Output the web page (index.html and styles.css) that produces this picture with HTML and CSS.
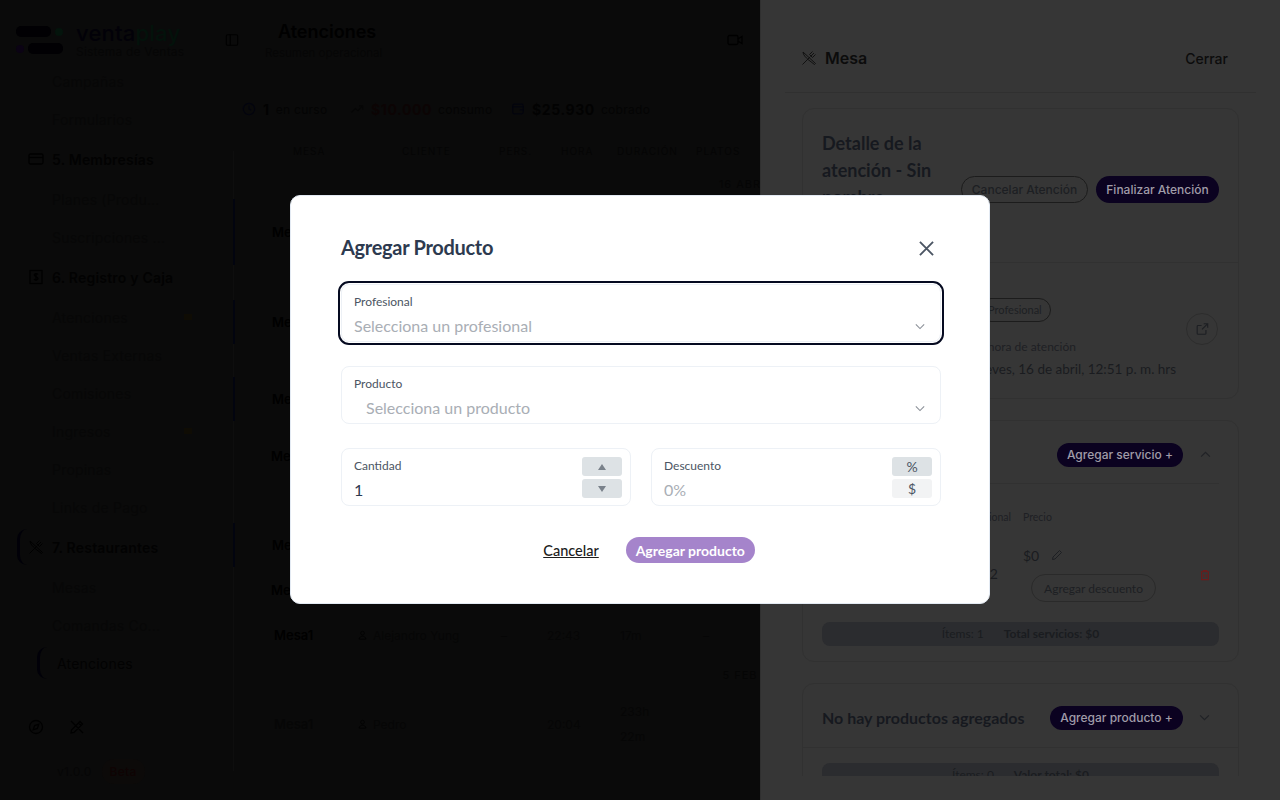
FILE: index.html
```html
<!DOCTYPE html>
<html lang="es">
<head>
  <meta charset="UTF-8">
  <title>Atenciones - ventaplay</title>
  <link rel="stylesheet" href="styles.css">
</head>
<body>

  <div class="app">

    <!-- Sidebar -->
    <aside class="sidebar">
      <div class="brand">
        <div class="logo">
          <div class="logo-line">
            <span class="logo-bar"></span>
            <span class="logo-dot logo-dot-green"></span>
          </div>
          <div class="logo-line logo-line-low">
            <span class="logo-dot logo-dot-purple"></span>
            <span class="logo-bar"></span>
          </div>
        </div>
        <div>
          <div class="brand-name">venta<span class="brand-play">play</span></div>
          <div class="brand-sub">Sistema de Ventas</div>
        </div>
      </div>

      <nav class="nav">
        <div class="nav-inner">
          <a class="nav-sub">Campañas</a>
          <a class="nav-sub">Formularios</a>
          <a class="nav-head">
            <svg class="nav-icon" viewBox="0 0 16 16"><rect x="1" y="3" width="14" height="10" rx="1.5"/><path d="M1 6.5h14"/></svg>
            5. Membresías
          </a>
          <a class="nav-sub">Planes (Produ...</a>
          <a class="nav-sub">Suscripciones ...</a>
          <a class="nav-head">
            <svg class="nav-icon" viewBox="0 0 16 16"><rect x="2" y="1.5" width="12" height="13"/><path d="M10 5.5c-.5-1-3.5-1.2-3.8.4C6 7.800 10 7.500 10 9.700c0 1.600-3.400 1.600-4 .3M8 4v8"/></svg>
            6. Registro y Caja
          </a>
          <a class="nav-sub nav-sub-more">Atenciones<span class="nav-caret"></span></a>
          <a class="nav-sub">Ventas Externas</a>
          <a class="nav-sub">Comisiones</a>
          <a class="nav-sub nav-sub-more">Ingresos<span class="nav-caret"></span></a>
          <a class="nav-sub">Propinas</a>
          <a class="nav-sub">Links de Pago</a>
          <a class="nav-head nav-head-active">
            <svg class="nav-icon nav-icon-thin" viewBox="0 0 16 16"><path d="M2 2c0 3 3 5.500 5 7.500L13.500 14.500 14.500 13.500 2 2M1.500 14.500 9.500 6.500M8.500 4.500 11.500 1.500M10 6l3-3M11.500 7.500l3-3M8.500 4.500l3 3"/></svg>
            7. Restaurantes
          </a>
          <a class="nav-sub">Mesas</a>
          <a class="nav-sub">Comandas Co...</a>
          <a class="nav-current">Atenciones</a>
        </div>
      </nav>

      <div class="side-tools">
        <svg class="tool-icon" viewBox="0 0 16 16"><circle cx="8" cy="8" r="6.500"/><path d="M10.800 5.200 9.400 9.400 5.200 10.800 6.600 6.600z"/></svg>
        <svg class="tool-icon" viewBox="0 0 16 16"><path d="M2 14 2.500 11 11 2.500 13.500 5 5 13.500zM2 2l12 12M9.500 4l2.500 2.500"/></svg>
      </div>
      <div class="version">
        <span>v1.0.0</span>
        <span class="beta">Beta</span>
      </div>
    </aside>

    <!-- Main -->
    <main class="main">
      <div class="topbar">
        <svg class="top-icon" viewBox="0 0 16 16"><rect x="1.500" y="2" width="13" height="12" rx="1.500"/><path d="M6 2v12"/></svg>
        <div class="top-titles">
          <h1>Atenciones</h1>
          <p>Resumen operacional</p>
        </div>
        <svg class="top-video" viewBox="0 0 16 12"><rect x="1" y="1.500" width="10" height="9" rx="1.500"/><path d="M11 5l4-2.500v7L11 7"/></svg>
      </div>

      <div class="stats">
        <div class="stat stat-first">
          <svg class="stat-icon stat-icon-navy" viewBox="0 0 16 16"><circle cx="8" cy="8" r="6.500"/><path d="M8 4v4l2.500 1.500"/></svg>
          <strong>1</strong><span>en curso</span>
        </div>
        <div class="stat stat-second">
          <svg class="stat-icon" viewBox="0 0 16 16"><path d="M1.500 12 6 7.500 9 10l5.500-5.500M10.500 4.500h4v4"/></svg>
          <strong class="stat-red">$10.000</strong><span>consumo</span>
        </div>
        <div class="stat stat-third">
          <svg class="stat-icon stat-icon-navy" viewBox="0 0 16 16"><rect x="2" y="2.500" width="12" height="11" rx="2"/><path d="M2 5.500h12M10 9h4"/></svg>
          <strong>$25.930</strong><span>cobrado</span>
        </div>
      </div>

      <div class="table-head">
        <span>MESA</span>
        <span>CLIENTE</span>
        <span>PERS.</span>
        <span>HORA</span>
        <span>DURACIÓN</span>
        <span>PLATOS</span>
      </div>

      <div class="table-body">
        <div class="date-label date-first">16 ABR</div>
        <div class="row row-tall row-open"><b>Mesa1</b></div>
        <div class="row row-b row-open"><b>Mesa1</b></div>
        <div class="row row-c row-open"><b>Mesa1</b></div>
        <div class="row row-d row-left"><b>Mesa1</b></div>
        <div class="row row-e row-open"><b>Mesa1</b></div>
        <div class="row row-f row-left"><b>Mesa1</b></div>
        <div class="row row-g">
          <b>Mesa1</b>
          <span class="client">
            <svg class="person" viewBox="0 0 12 12"><circle cx="6" cy="3.500" r="2.500"/><path d="M1.500 11.500c0-5 9-5 9 0z"/></svg>
            Alejandro Yung
          </span>
          <span>–</span>
          <span>22:43</span>
          <span>17m</span>
          <span>–</span>
        </div>
        <div class="date-label date-second">5 FEB</div>
        <div class="row row-tall row-h row-open-faint">
          <b>Mesa1</b>
          <span class="client">
            <svg class="person" viewBox="0 0 12 12"><circle cx="6" cy="3.500" r="2.500"/><path d="M1.500 11.500c0-5 9-5 9 0z"/></svg>
            Pedro
          </span>
          <span></span>
          <span>20:04</span>
          <span class="two-lines">233h<br>22m</span>
          <span></span>
        </div>
      </div>
    </main>

    <!-- Drawer -->
    <section class="drawer">
      <header class="drawer-head">
        <svg class="drawer-icon" viewBox="0 0 16 16"><path d="M2 2c0 3 3 5.500 5 7.500L13.500 14.500 14.500 13.500 2 2M1.500 14.500 9.500 6.500M8.500 4.500 11.500 1.500M10 6l3-3M11.500 7.500l3-3M8.500 4.500l3 3"/></svg>
        <h2>Mesa</h2>
        <a class="drawer-close">Cerrar</a>
      </header>

      <div class="drawer-body">
        <div class="card">
          <div class="detail-head">
            <h3 class="detail-title">Detalle de la atención - Sin nombre</h3>
            <div class="detail-actions">
              <button class="pill pill-line">Cancelar Atención</button>
              <button class="pill pill-dark pill-finish">Finalizar Atención</button>
            </div>
          </div>
          <div class="detail-info">
            <div class="info-text">
              <span class="tag">Profesional</span>
              <div class="info-label">Fecha y hora de atención</div>
              <div class="info-value">Jueves, 16 de abril, 12:51 p. m. hrs</div>
            </div>
            <button class="round-link">
              <svg viewBox="0 0 16 16"><path d="M12.500 9v4a1 1 0 0 1-1 1h-8a1 1 0 0 1-1-1V5a1 1 0 0 1 1-1h4M8 8.500 14 2.500M10 2h4.500v4.500"/></svg>
            </button>
          </div>
        </div>

        <div class="card">
          <div class="block-head block-services">
            <h3>Servicios agregados</h3>
            <button class="pill pill-dark">Agregar servicio +</button>
            <svg class="chev" viewBox="0 0 12 8"><path d="M1 6.500 6 1.500l5 5"/></svg>
          </div>
          <div class="services">
            <div class="svc-grid svc-labels">
              <span></span>
              <span class="svc-pro">Profesional</span>
              <span>Precio</span>
              <span></span>
            </div>
            <div class="svc-grid svc-row">
              <span>Servicio</span>
              <span class="svc-pro">Profesional 2</span>
              <div>
                <div class="price">$0
                  <svg class="pencil" viewBox="0 0 12 12"><path d="M1.500 10.500 2 8l6.500-6.500 2 2L4 10z"/></svg>
                </div>
                <button class="discount">Agregar descuento</button>
              </div>
              <svg class="trash" viewBox="0 0 12 14"><path d="M1 3h10M4 3V1.500h4V3M2 3v9.500h8V3M4.500 6v4M7.500 6v4"/></svg>
            </div>
            <div class="summary"><span>Ítems: 1</span><b>Total servicios: $0</b></div>
          </div>
        </div>

        <div class="card">
          <div class="block-head block-products">
            <h3>No hay productos agregados</h3>
            <button class="pill pill-dark">Agregar producto +</button>
            <svg class="chev" viewBox="0 0 12 8"><path d="M1 1.500l5 5 5-5"/></svg>
          </div>
          <div class="products">
            <div class="summary"><span>Ítems: 0</span><b>Valor total: $0</b></div>
          </div>
        </div>
      </div>
    </section>
  </div>

  <!-- Modal -->
  <div class="overlay">
    <div class="modal">
      <div class="modal-head">
        <h2>Agregar Producto</h2>
        <svg class="modal-x" viewBox="0 0 16 16"><path d="M1 1l14 14M15 1 1 15"/></svg>
      </div>

      <div class="field field-focus">
        <label>Profesional</label>
        <div class="field-line">
          <span class="placeholder">Selecciona un profesional</span>
          <svg class="field-chev" viewBox="0 0 12 8"><path d="M1 1.500l5 5 5-5"/></svg>
        </div>
      </div>

      <div class="field">
        <label>Producto</label>
        <div class="field-line">
          <span class="placeholder placeholder-in">Selecciona un producto</span>
          <svg class="field-chev" viewBox="0 0 12 8"><path d="M1 1.500l5 5 5-5"/></svg>
        </div>
      </div>

      <div class="field-pair">
        <div class="field field-side">
          <div>
            <label>Cantidad</label>
            <div class="value">1</div>
          </div>
          <div class="side-btns">
            <span class="side-btn side-on"><i class="arrow-up"></i></span>
            <span class="side-btn side-on"><i class="arrow-down"></i></span>
          </div>
        </div>
        <div class="field field-side">
          <div>
            <label>Descuento</label>
            <div class="value value-empty">0%</div>
          </div>
          <div class="side-btns">
            <span class="side-btn side-on">%</span>
            <span class="side-btn">$</span>
          </div>
        </div>
      </div>

      <div class="modal-actions">
        <a class="link-cancel">Cancelar</a>
        <button class="btn-add">Agregar producto</button>
      </div>
    </div>
  </div>

</body>
</html>
```

FILE: styles.css
```css
* {
  box-sizing: border-box;
}

body {
  margin: 0;
  height: 800px;
  overflow: hidden;
  font-family: 'Inter', sans-serif;
  background: #0a0a0a;
  color: #050505;
}

h1, h2, h3, p {
  margin: 0;
}

button {
  font-family: inherit;
  cursor: pointer;
}

svg {
  display: block;
  fill: none;
  stroke: currentColor;
  stroke-width: 1.3;
  flex-shrink: 0;
}

.app {
  display: flex;
  height: 800px;
}

/* Sidebar */
.sidebar {
  width: 220px;
  flex-shrink: 0;
  display: flex;
  flex-direction: column;
}

.brand {
  height: 76px;
  flex-shrink: 0;
  padding: 22px 0 0 16px;
  display: flex;
  gap: 13px;
}

.logo {
  width: 47px;
  padding-top: 4px;
}

.logo-line {
  display: flex;
  align-items: center;
  gap: 4px;
  height: 11px;
  justify-content: space-between;
}

.logo-line-low {
  margin-top: 6px;
}

.logo-bar {
  width: 35px;
  height: 11px;
  border-radius: 5px;
  background: #010003;
}

.logo-dot {
  width: 8px;
  height: 8px;
  border-radius: 50%;
}

.logo-dot-green {
  background: #04140c;
}

.logo-dot-purple {
  background: #0b0314;
}

.brand-name {
  font-size: 22px;
  line-height: 22px;
  font-weight: 500;
  color: #020108;
  letter-spacing: 0.2px;
}

.brand-play {
  color: #03120b;
}

.brand-sub {
  font-size: 12px;
  line-height: 14px;
  margin-top: 1px;
  color: #060606;
  letter-spacing: 0.2px;
}

.nav {
  height: 624px;
  flex-shrink: 0;
  overflow: hidden;
}

.nav-inner {
  margin-top: -14px;
}

.nav-sub {
  display: flex;
  justify-content: space-between;
  align-items: center;
  height: 38px;
  padding: 0 28px 0 52px;
  font-size: 14px;
  color: #070707;
  letter-spacing: 0.2px;
}

.nav-caret {
  width: 8px;
  height: 6px;
  background: #0f0c04;
}

.nav-head {
  display: flex;
  align-items: center;
  height: 38px;
  margin: 2px 20px 2px 17px;
  padding-left: 11px;
  gap: 8px;
  font-size: 14px;
  font-weight: 600;
  color: #020202;
  letter-spacing: 0.2px;
}

.nav-head-active {
  height: 36px;
  margin: 3px 20px 3px 17px;
  border-left: 3px solid #010008;
  border-radius: 10px;
  padding-left: 8px;
}

.nav-icon {
  width: 16px;
  height: 16px;
  color: #000;
}

.nav-icon-thin {
  stroke-width: 1;
}

.nav-current {
  display: flex;
  align-items: center;
  height: 32px;
  margin: 3px 45px 0 37px;
  padding-left: 17px;
  border-left: 3px solid #010008;
  border-radius: 10px;
  font-size: 14px;
  color: #020202;
  letter-spacing: 0.2px;
}

.side-tools {
  display: flex;
  gap: 25px;
  padding: 19px 0 0 28px;
}

.tool-icon {
  width: 16px;
  height: 16px;
  color: #000;
}

.version {
  display: flex;
  align-items: center;
  gap: 10px;
  padding: 24px 0 0 57px;
  font-size: 12px;
  letter-spacing: 0.3px;
  color: #060606;
}

.beta {
  padding: 5px 8px;
  border-radius: 12px;
  background: #0c0a09;
  color: #0f0303;
  font-weight: 500;
}

/* Main */
.main {
  width: 540px;
  flex-shrink: 0;
  overflow: hidden;
}

.topbar {
  display: flex;
  align-items: flex-start;
  height: 94px;
  padding: 22px 17px 0 5px;
}

.top-icon {
  width: 14px;
  height: 14px;
  margin: 11px 26px 0 0;
  color: #000;
}

.top-titles {
  width: 463px;
}

.top-titles h1 {
  margin-left: 13px;
  font-size: 18px;
  line-height: 20px;
  font-weight: 600;
  color: #000;
}

.top-titles p {
  font-size: 11.5px;
  line-height: 16px;
  margin-top: 3px;
  color: #060606;
}

.top-video {
  width: 16px;
  height: 12px;
  margin: 12px 0 0 0;
  color: #000;
}

.stats {
  display: flex;
  align-items: center;
  height: 30px;
  padding-left: 22px;
}

.stat {
  display: flex;
  align-items: center;
  font-size: 12px;
  color: #040404;
  letter-spacing: 0.3px;
}

.stat strong {
  font-size: 14px;
  margin-right: 6px;
  color: #020202;
  letter-spacing: 0.6px;
}

.stat strong.stat-red {
  color: #0c0404;
}

.stat-icon {
  width: 14px;
  height: 14px;
  margin-right: 7px;
  color: #060606;
}

.stat-icon-navy {
  color: #03040e;
}

.stat-first {
  width: 108px;
}

.stat-second {
  width: 161px;
}

.table-head {
  display: grid;
  grid-template-columns: 109px 97px 62px 56px 79px 60px;
  height: 46px;
  padding: 20px 0 0 73px;
  font-size: 10px;
  line-height: 14px;
  letter-spacing: 1px;
  color: #050505;
}

.table-body {
  margin-left: 13px;
  height: 620px;
  width: 100%;
  border-left: 1px solid #0e0e0e;
  margin-top: -19px;
  padding-top: 28px;
}

.date-label {
  width: 40px;
  height: 20px;
  margin-left: 486px;
  display: flex;
  justify-content: center;
  font-size: 11px;
  line-height: 20px;
  letter-spacing: 1px;
  white-space: nowrap;
  color: #050505;
}

.date-first {
  margin-top: -5px;
  margin-bottom: 5px;
}

.date-second {
  margin-top: 8px;
  margin-bottom: 6px;
}

.row {
  display: grid;
  grid-template-columns: 84px 143px 46px 73px 83px 60px;
  align-items: center;
  height: 44px;
  margin-left: -1px;
  padding-left: 39px;
  font-size: 12px;
  color: #060606;
}

.row b {
  font-size: 13px;
  font-weight: 600;
  color: #000;
}

.row-tall {
  height: 66px;
}

.row-open {
  border-left: 2px solid #02040f;
  padding-left: 37px;
}

.row-open-faint {
  border-left: 1px solid #0e0e0e;
  padding-left: 40px;
}

.row-left {
  padding-left: 38px;
}

.row-b {
  margin-top: 35px;
}

.row-c {
  margin-top: 33px;
}

.row-d {
  margin-top: 13px;
}

.row-e {
  margin-top: 45px;
}

.row-f {
  margin-top: 1px;
}

.row-g {
  margin-top: 1px;
  padding-left: 41px;
}

.client {
  display: flex;
  align-items: center;
  gap: 6px;
}

.person {
  width: 9px;
  height: 10px;
  color: #030303;
}

.two-lines {
  line-height: 25px;
}

.row-h b {
  color: #060606;
}

/* Drawer */
.drawer {
  width: 520px;
  flex-shrink: 0;
  background: #363636;
  border-left: 1px solid #303030;
  color: #16191f;
}

.drawer-head {
  display: flex;
  align-items: center;
  height: 93px;
  margin: 0 24px;
  padding: 24px 28px 0 16px;
  border-bottom: 1px solid #303030;
}

.drawer-icon {
  width: 16px;
  height: 16px;
  margin-right: 8px;
  color: #111;
  stroke-width: 1;
}

.drawer-head h2 {
  font-size: 16px;
  font-weight: 600;
  color: #0c0c0c;
}

.drawer-close {
  margin-left: auto;
  font-size: 14px;
  font-weight: 500;
  color: #0c0c0c;
}

.drawer-body {
  height: 683px;
  overflow: hidden;
  padding: 15px 41px 0 41px;
}

.card {
  border: 1px solid #313131;
  border-radius: 12px;
  margin-bottom: 21px;
  font-family: 'Lato', sans-serif;
}

.detail-head {
  display: flex;
  justify-content: space-between;
  height: 154px;
  padding: 21px 19px 0 19px;
  border-bottom: 1px solid #313131;
}

.detail-title {
  width: 125px;
  font-size: 18px;
  line-height: 27px;
  font-weight: 700;
  color: #16191f;
}

.detail-actions {
  display: flex;
  gap: 8px;
  height: 27px;
  margin-top: 46px;
}

.pill {
  display: flex;
  align-items: center;
  justify-content: center;
  height: 27px;
  padding: 0;
  border-radius: 14px;
  font-family: 'Inter', sans-serif;
  font-size: 12px;
  font-weight: 500;
  white-space: nowrap;
}

.pill-line {
  width: 127px;
  background: transparent;
  border: 1px solid #1c1c1c;
  color: #1d1f23;
}

.pill-dark {
  background: #0b0220;
  border: 0;
  color: #a09ca8;
}

.pill-finish {
  width: 123px;
}

.detail-info {
  display: flex;
  height: 135px;
  padding: 35px 19px 0 142px;
  justify-content: space-between;
  align-items: flex-start;
}

.tag {
  display: inline-block;
  height: 24px;
  padding: 0 8px;
  margin-left: 34px;
  border: 1px solid #1c1c1c;
  border-radius: 12px;
  font-size: 11px;
  line-height: 22px;
  color: #1d1f23;
}

.info-label {
  margin-top: 17px;
  font-size: 12px;
  line-height: 16px;
  color: #1e2024;
  white-space: nowrap;
}

.info-value {
  margin: 4px 0 0 27px;
  font-size: 13.5px;
  line-height: 20px;
  color: #1a1c20;
  white-space: nowrap;
}

.round-link {
  width: 32px;
  height: 32px;
  margin: 15px 1px 0 0;
  padding: 8px;
  background: transparent;
  border: 1px solid #2d2d2d;
  border-radius: 50%;
  color: #1d1f23;
}

.block-head {
  display: flex;
  align-items: center;
  padding: 4px 28px 0 19px;
  border-bottom: 1px solid #313131;
}

.block-head h3 {
  margin-right: auto;
  font-size: 16px;
  font-weight: 700;
  color: #16191f;
  white-space: nowrap;
}

.block-head .pill {
  height: 24px;
}

.block-services {
  height: 63px;
  margin-right: 19px;
  padding: 5px 0 0 19px;
}

.block-services .pill {
  width: 126px;
}

.block-products {
  height: 64px;
}

.block-products .pill {
  width: 133px;
}

.chev {
  width: 11px;
  height: 7px;
  margin-left: 16px;
  color: #202226;
}

.block-services .chev {
  margin: 0 8px 0 17px;
}

.services {
  padding: 25px 19px 15px;
}

.svc-grid {
  display: grid;
  grid-template-columns: 88px 113px 167px 29px;
}

.svc-labels {
  font-size: 10.5px;
  line-height: 16px;
  color: #1e2024;
}

.svc-pro {
  text-align: right;
  padding-right: 12px;
  white-space: nowrap;
}

.svc-row {
  align-items: center;
  margin-top: 19px;
  margin-bottom: 20px;
  font-size: 14px;
  color: #1a1c20;
}

.svc-row .svc-pro {
  padding-right: 25px;
}

.price {
  display: flex;
  align-items: center;
  gap: 12px;
  height: 22px;
  font-size: 14px;
}

.pencil {
  width: 12px;
  height: 12px;
  color: #1d1f23;
  stroke-width: 1;
}

.discount {
  display: block;
  width: 125px;
  height: 28px;
  margin: 8px 0 0 8px;
  padding: 0;
  background: transparent;
  border: 1px solid #2a2a2a;
  border-radius: 14px;
  font-family: 'Lato', sans-serif;
  font-size: 12px;
  color: #1d1f23;
}

.trash {
  width: 10px;
  height: 12px;
  margin: 4px 0 0 10px;
  color: #6e1a1a;
}

.summary {
  display: flex;
  justify-content: center;
  gap: 20px;
  height: 24px;
  border-radius: 8px;
  background: #2b2c2f;
  font-size: 12px;
  line-height: 24px;
  color: #1a1c20;
}

.products {
  padding: 15px 19px;
}

/* Modal */
.overlay {
  position: fixed;
  top: 0;
  left: 0;
  width: 1280px;
  height: 799px;
  display: flex;
  align-items: center;
  justify-content: center;
  font-family: 'Lato', sans-serif;
}

.modal {
  width: 700px;
  height: 409px;
  padding: 40px 48px 0 50px;
  background: #fff;
  border: 1px solid #e3eaf3;
  border-radius: 10px;
}

.modal-head {
  display: flex;
  justify-content: space-between;
  align-items: center;
  height: 24px;
  margin-bottom: 24px;
}

.modal-head h2 {
  margin-top: -2px;
  font-size: 20px;
  font-weight: 700;
  letter-spacing: -0.3px;
  color: #2d3a4f;
}

.modal-x {
  width: 15px;
  height: 15px;
  margin: 0 7px 0 0;
  color: #4b5563;
  stroke-width: 2;
}

.field {
  height: 58px;
  margin-bottom: 24px;
  padding: 10px 12px 0;
  border: 1px solid #edf1f6;
  border-radius: 8px;
}

.field-focus {
  outline: 2px solid #050a20;
  outline-offset: 1px;
}

.field label {
  display: block;
  font-size: 12px;
  line-height: 14px;
  color: #4b5563;
}

.field-line {
  display: flex;
  justify-content: space-between;
  align-items: center;
  margin-top: 6px;
  line-height: 22px;
}

.placeholder {
  font-size: 16px;
  color: #a9aeb5;
}

.placeholder-in {
  padding-left: 12px;
}

.field-chev {
  width: 10px;
  height: 7px;
  margin: 0 3px 0 0;
  color: #8b9098;
}

.field-pair {
  display: grid;
  grid-template-columns: 290px 290px;
  gap: 20px;
}

.field-side {
  display: flex;
  justify-content: space-between;
  padding: 10px 8px 0 12px;
  margin-bottom: 31px;
}

.value {
  margin-top: 5px;
  font-size: 16px;
  line-height: 24px;
  color: #2d3a4f;
}

.value-empty {
  color: #a9aeb5;
}

.side-btns {
  display: flex;
  flex-direction: column;
  gap: 3px;
  margin-top: -2px;
}

.side-btn {
  display: flex;
  align-items: center;
  justify-content: center;
  width: 40px;
  height: 19px;
  border-radius: 3px;
  background: #f2f3f4;
  font-size: 14px;
  line-height: 1;
  color: #4b5563;
}

.side-on {
  background: #dde2e5;
}

.arrow-up, .arrow-down {
  width: 0;
  height: 0;
  border-left: 4px solid transparent;
  border-right: 4px solid transparent;
}

.arrow-up {
  border-bottom: 6px solid #7a828b;
}

.arrow-down {
  border-top: 6px solid #7a828b;
}

.modal-actions {
  display: flex;
  justify-content: center;
  align-items: center;
  gap: 27px;
  padding-left: 16px;
}

.link-cancel {
  font-size: 14.5px;
  font-weight: 500;
  color: #1c1c1c;
  text-decoration: underline;
}

.btn-add {
  width: 129px;
  height: 26px;
  padding: 0;
  background: #a584cb;
  border: 0;
  border-radius: 13px;
  font-family: 'Lato', sans-serif;
  font-size: 14px;
  font-weight: 700;
  color: #fff;
}
```
